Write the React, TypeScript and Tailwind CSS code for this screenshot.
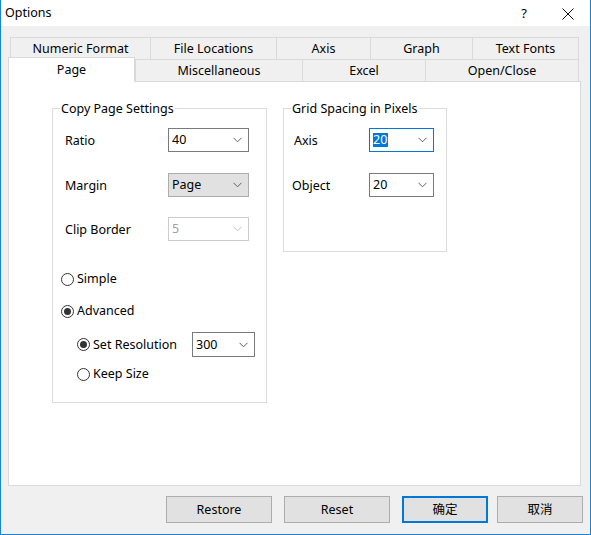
import React from "react";

const FONT = { fontFamily: '"Noto Sans", "Noto Sans CJK SC", sans-serif' };

function Chevron({ color = "#606060" }: { color?: string }) {
  return (
    <svg width="9" height="6" viewBox="0 0 9 6" className="shrink-0">
      <polyline points="0.5,0.8 4.5,4.8 8.5,0.8" fill="none" stroke={color} strokeWidth="1" />
    </svg>
  );
}

function Combo({
  value,
  w,
  variant = "normal",
}: {
  value: string;
  w: string;
  variant?: "normal" | "button" | "disabled" | "focus";
}) {
  const base = "h-[24px] flex items-center justify-between pl-[3px] pr-[6px] border ";
  const cls =
    variant === "button"
      ? "bg-[#e1e1e1] border-[#adadad] text-black"
      : variant === "disabled"
      ? "bg-white border-[#cccccc] text-[#a0a0a0]"
      : variant === "focus"
      ? "bg-white border-[#0078d7] text-black"
      : "bg-white border-[#7a7a7a] text-black";
  return (
    <div className={base + cls + " " + w}>
      {variant === "focus" ? (
        <span className="bg-[#0078d7] text-white leading-[14px] h-[14px] pr-[1px]">{value}</span>
      ) : (
        <span className="leading-[14px]">{value}</span>
      )}
      <Chevron color={variant === "disabled" ? "#c0c0c0" : "#606060"} />
    </div>
  );
}

function Radio({ checked, label }: { checked?: boolean; label: string }) {
  return (
    <div className="flex items-center h-[16px]">
      <span className="w-[13px] h-[13px] rounded-full border border-[#333333] bg-white flex items-center justify-center shrink-0">
        {checked && <span className="w-[7px] h-[7px] rounded-full bg-[#333333]" />}
      </span>
      <span className="ml-[3px] pt-[1px]">{label}</span>
    </div>
  );
}

function Tab({ label, w, last }: { label: string; w: string; last?: boolean }) {
  return (
    <div
      className={
        "h-[22px] flex items-center justify-center pt-[2px] border-t border-l border-[#d9d9d9] bg-[#f0f0f0] " +
        (last ? "border-r " : "") +
        w
      }
    >
      {label}
    </div>
  );
}

function Button({ label, w, primary }: { label: string; w: string; primary?: boolean }) {
  return (
    <div
      className={
        "h-[27px] flex items-center justify-center pt-[2px] bg-[#e1e1e1] " +
        (primary ? "border-2 border-[#0078d7] " : "border border-[#adadad] ") +
        w
      }
    >
      {label}
    </div>
  );
}

export default function App() {
  return (
    <div
      style={FONT}
      className="w-[591px] h-[535px] bg-[#f0f0f0] border-x border-b border-[#1883d7] flex flex-col text-[12.5px] text-black overflow-hidden"
    >
      {/* Title bar */}
      <div className="h-[26px] bg-white flex items-center pl-[4px] pt-[1px] shrink-0">
        <span className="text-[12.5px]">Options</span>
        <span className="ml-auto w-[16px] text-center mr-[30px] text-[13px]">?</span>
        <svg width="12" height="12" viewBox="0 0 12 12" className="mr-[16px]">
          <path d="M0.5 0.5 L11.5 11.5 M11.5 0.5 L0.5 11.5" stroke="#111" strokeWidth="1" fill="none" />
        </svg>
      </div>

      {/* Tabs + panel */}
      <div className="ml-[7px] mt-[11px] w-[573px] flex flex-col">
        <div className="flex ml-[2px]">
          <Tab label="Numeric Format" w="w-[140px]" />
          <Tab label="File Locations" w="w-[126px]" />
          <Tab label="Axis" w="w-[94px]" />
          <Tab label="Graph" w="w-[102px]" />
          <Tab label="Text Fonts" w="w-[107px]" last />
        </div>
        <div className="flex h-[22px] items-end relative z-10">
          <div className="w-[127px] self-start -mt-[2px] bg-white border-t border-l border-r border-[#d9d9d9] flex items-start justify-center pt-[3px] relative -mb-[1px] h-[25px]">
            Page
          </div>
          <Tab label="Miscellaneous" w="w-[167px]" />
          <Tab label="Excel" w="w-[123px]" />
          <Tab label="Open/Close" w="w-[154px]" last />
        </div>
        <div className="h-[405px] bg-white border border-[#d9d9d9] flex items-start pl-[43px] pt-[26px]">
          {/* Copy Page Settings */}
          <div className="relative w-[215px] h-[295px] border border-[#dcdcdc] pl-[12px] pt-[19px]">
            <span className="absolute -top-[8px] left-[7px] bg-white px-[1px] leading-[16px]">Copy Page Settings</span>
            <div className="flex items-center">
              <span className="w-[103px] pt-[2px]">Ratio</span>
              <Combo value="40" w="w-[81px]" />
            </div>
            <div className="flex items-center mt-[21px]">
              <span className="w-[103px] pt-[2px]">Margin</span>
              <Combo value="Page" w="w-[81px]" variant="button" />
            </div>
            <div className="flex items-center mt-[20px]">
              <span className="w-[103px] pt-[2px]">Clip Border</span>
              <Combo value="5" w="w-[81px]" variant="disabled" />
            </div>
            <div className="-ml-[4px] mt-[30px] flex flex-col">
              <Radio label="Simple" />
              <div className="mt-[16px]">
                <Radio checked label="Advanced" />
              </div>
              <div className="ml-[16px] mt-[13px] flex items-center h-[25px]">
                <div className="w-[115px]">
                  <Radio checked label="Set Resolution" />
                </div>
                <div className="h-[25px]">
                  <Combo value="300" w="w-[63px] h-[25px]" />
                </div>
              </div>
              <div className="ml-[16px] mt-[9px]">
                <Radio label="Keep Size" />
              </div>
            </div>
          </div>

          {/* Grid Spacing */}
          <div className="relative ml-[16px] w-[164px] h-[144px] border border-[#dcdcdc] pl-[10px] pt-[19px]">
            <span className="absolute -top-[8px] left-[7px] bg-white px-[1px] leading-[16px]">Grid Spacing in Pixels</span>
            <div className="flex items-center">
              <span className="w-[75px] pt-[2px]">Axis</span>
              <Combo value="20" w="w-[65px]" variant="focus" />
            </div>
            <div className="flex items-center mt-[21px]">
              <span className="w-[75px] -ml-[2px] pt-[2px]">Object</span>
              <Combo value="20" w="w-[65px] ml-[2px]" />
            </div>
          </div>
        </div>
      </div>

      {/* Buttons */}
      <div className="flex mt-[10px] ml-[165px]">
        <Button label="Restore" w="w-[106px]" />
        <Button label="Reset" w="w-[106px] ml-[12px]" />
        <Button label="确定" w="w-[86px] ml-[12px]" primary />
        <Button label="取消" w="w-[86px] ml-[9px]" />
      </div>
    </div>
  );
}
